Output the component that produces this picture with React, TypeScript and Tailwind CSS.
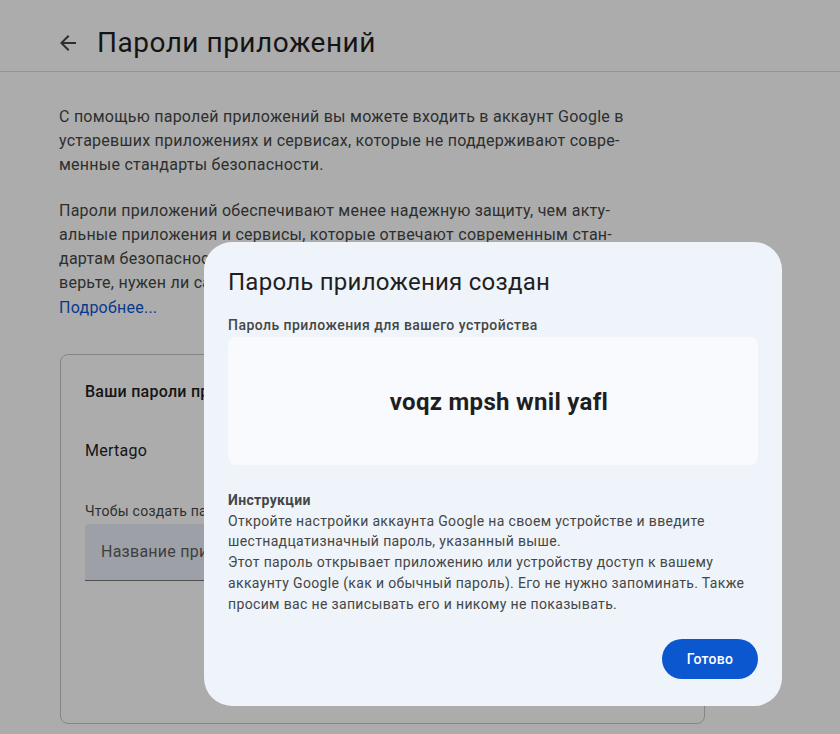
import React from 'react';

function ArrowBack() {
  return (
    <svg width="24" height="24" viewBox="0 0 24 24" className="fill-[#444746]">
      <path d="M20 11H7.83l5.59-5.59L12 4l-8 8 8 8 1.41-1.41L7.83 13H20v-2z" />
    </svg>
  );
}

export default function App() {
  return (
    <div className="relative h-[734px] w-[840px] overflow-hidden bg-white font-['Roboto','Noto_Sans',sans-serif] text-[#1f1f1f]">
      {/* Page header */}
      <header className="flex h-[72px] items-center gap-[17px] border-b border-[#dadce0] pl-[56px] pt-[14px]">
        <ArrowBack />
        <h1 className="text-[28px] font-normal leading-9 tracking-[0.5px] text-[#1f1f1f]">Пароли приложений</h1>
      </header>

      {/* Page body */}
      <main className="px-[59px] pt-[33px] text-[16px] leading-6 tracking-[0.25px] text-[#444746]">
        <p>
          С помощью паролей приложений вы можете входить в аккаунт Google в<br />
          устаревших приложениях и сервисах, которые не поддерживают совре-<br />
          менные стандарты безопасности.
        </p>
        <p className="mt-[22px]">
          Пароли приложений обеспечивают менее надежную защиту, чем акту-<br />
          альные приложения и сервисы, которые отвечают современным стан-<br />
          дартам безопасности. Прежде чем создавать пароль приложения, про-<br />
          верьте, нужен ли сам пароль для входа в приложение.
        </p>
        <a className="mt-[1px] block text-[#0b57d0]">Подробнее...</a>

        <section className="ml-px mt-[34px] h-[370px] w-[645px] rounded-lg border border-[#c4c7c5] px-[24px] pt-[25px]">
          <h2 className="text-[16px] font-medium text-[#1f1f1f]">Ваши пароли приложений</h2>
          <div className="mt-[35px] text-[16px] text-[#1f1f1f]">Mertago</div>
          <div className="mt-[38px] text-[14px] leading-5 text-[#444746]">
            Чтобы создать пароль приложения, введите его название.
          </div>
          <div className="mt-[3px] flex h-[57px] w-[400px] items-center rounded-t border-b border-[#747775] bg-[#e9eef6] px-4 text-[16px] text-[#5e5e5e]">
            Название приложения
          </div>
        </section>
      </main>

      {/* Scrim */}
      <div className="absolute inset-0 bg-black/[0.325]" />

      {/* Dialog */}
      <div className="absolute left-[204px] top-[242px] w-[578px] rounded-[28px] bg-[#eff3fa] px-6 pb-[27px] pt-[24px]">
        <h2 className="text-[24px] font-normal leading-8 tracking-[0.25px] text-[#1f1f1f]">Пароль приложения создан</h2>
        <div className="mt-[17px] text-[14px] font-medium leading-5 tracking-[0.45px] text-[#444746]">
          Пароль приложения для вашего устройства
        </div>
        <div className="mt-[2px] flex h-[128px] items-center justify-center rounded-lg bg-[#f8fafd] pl-3 pt-[1px]">
          <span className="text-[24px] font-bold tracking-[0.3px] text-[#1f1f1f]">voqz mpsh wnil yafl</span>
        </div>
        <div className="mt-[25px] text-[14px] leading-[20.7px] tracking-[0.35px] text-[#444746]">
          <div className="font-bold">Инструкции</div>
          <p>
            Откройте настройки аккаунта Google на своем устройстве и введите<br />
            шестнадцатизначный пароль, указанный выше.
          </p>
          <p>
            Этот пароль открывает приложению или устройству доступ к вашему<br />
            аккаунту Google (как и обычный пароль). Его не нужно запоминать. Также<br />
            просим вас не записывать его и никому не показывать.
          </p>
        </div>
        <div className="mt-[25px] flex justify-end">
          <button className="h-10 w-24 rounded-full bg-[#0b57d0] text-[14px] font-medium tracking-[0.3px] text-white">
            Готово
          </button>
        </div>
      </div>
    </div>
  );
}
